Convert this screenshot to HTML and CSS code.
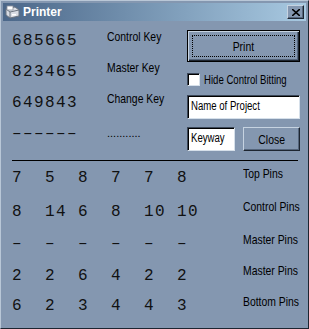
FILE: index.html
```html
<!DOCTYPE html>
<html lang="en">
<head>
    <meta charset="UTF-8">
    <title>Printer</title>
    <link rel="stylesheet" href="styles.css">
</head>
<body>
    <div class="window">
        <div class="titlebar">
            <svg class="app-icon" width="16" height="14" viewBox="0 0 16 14">
                <path d="M2 4 L11 2 L15 5 L15 11 L6 13 L2 10 Z" fill="#d8dce4" stroke="#6b7480" stroke-width="1"/>
                <path d="M2 4 L6 7 L15 5" fill="none" stroke="#6b7480" stroke-width="1"/>
                <path d="M6 7 L6 13" stroke="#6b7480" stroke-width="1"/>
                <rect x="3" y="1" width="6" height="4" fill="#ffffff" stroke="#8a919c" stroke-width="0.8"/>
                <rect x="8" y="9" width="4" height="1.5" fill="#ffffff"/>
            </svg>
            <span class="title">Printer</span>
            <button class="title-close">
                <svg width="8" height="7" viewBox="0 0 8 7"><path d="M0 0 L8 7 M8 0 L0 7" stroke="#000" stroke-width="1.6"/></svg>
            </button>
        </div>

        <div class="content">
            <div class="top">
                <div class="keys">
                    <div class="num">685665</div><div class="label"><span class="t">Control Key</span></div>
                    <div class="num">823465</div><div class="label"><span class="t">Master Key</span></div>
                    <div class="num">649843</div><div class="label"><span class="t">Change Key</span></div>
                    <div class="num">––––––</div><div class="label dots">...........</div>
                </div>
                <div class="controls">
                    <button class="btn btn-default"><span class="focus"><span class="t">Print</span></span></button>
                    <label class="check"><span class="box"></span><span class="t">Hide Control Bitting</span></label>
                    <div class="textbox wide"><span class="t">Name of Project</span></div>
                    <div class="row">
                        <div class="textbox small"><span class="t">Keyway</span></div>
                        <button class="btn btn-close"><span class="t mid">Close</span></button>
                    </div>
                </div>
            </div>

            <div class="divider"></div>

            <div class="pins">
                <span>7</span><span>5</span><span>8</span><span>7</span><span>7</span><span>8</span><div class="label"><span class="t">Top Pins</span></div>
                <span>8</span><span>14</span><span>6</span><span>8</span><span>10</span><span>10</span><div class="label"><span class="t">Control Pins</span></div>
                <span>–</span><span>–</span><span>–</span><span>–</span><span>–</span><span>–</span><div class="label"><span class="t">Master Pins</span></div>
                <span>2</span><span>2</span><span>6</span><span>4</span><span>2</span><span>2</span><div class="label"><span class="t">Master Pins</span></div>
                <span>6</span><span>2</span><span>3</span><span>4</span><span>4</span><span>3</span><div class="label"><span class="t">Bottom Pins</span></div>
            </div>
        </div>
    </div>
</body>
</html>
```

FILE: styles.css
```css
body {
    margin: 0;
    font-family: "Liberation Sans", Arial, sans-serif;
}

.window {
    width: 309px;
    height: 329px;
    box-sizing: border-box;
    background-color: #8497b0;
    border: 1px solid;
    border-color: #b9c7d7 #1d2530 #1d2530 #b9c7d7;
    padding: 2px;
    overflow: hidden;
}

.titlebar {
    height: 18px;
    display: flex;
    align-items: center;
    background: linear-gradient(to right, #4b6789, #a8c9e1);
}

.app-icon {
    margin-left: 1px;
}

.title {
    margin-left: 3px;
    color: white;
    font-weight: bold;
    font-size: 12px;
}

.title-close {
    margin-left: auto;
    margin-right: 2px;
    width: 17px;
    height: 14px;
    padding: 0;
    display: flex;
    justify-content: center;
    align-items: center;
    background-color: #8497b0;
    border: 1px solid;
    border-color: #c6d3e1 #1d2530 #1d2530 #c6d3e1;
    box-shadow: inset -1px -1px 0 #55657b;
}

/* narrow system font look */
.t {
    display: inline-block;
    white-space: nowrap;
    transform: scaleX(0.8);
    transform-origin: left center;
}

.btn .t {
    transform-origin: center;
}

.content {
    padding: 4px 0 0 9px;
}

.top {
    display: flex;
}

.keys {
    display: grid;
    grid-template-columns: 95px 80px;
    grid-template-rows: repeat(4, 31px);
}

.num, .pins > span {
    font-family: "Liberation Mono", monospace;
    font-size: 16px;
    letter-spacing: 1.4px;
    color: #111;
    display: flex;
    align-items: center;
}

.label {
    font-size: 13px;
    color: #000;
    padding-top: 4px;
    white-space: nowrap;
}

.dots {
    padding-top: 0;
    display: flex;
    align-items: center;
    font-size: 11px;
    margin-top: -1px;
}

.controls {
    width: 113px;
    padding-top: 5px;
    display: flex;
    flex-direction: column;
}

.btn {
    font-family: inherit;
    font-size: 13px;
    color: #000;
    background-color: #8497b0;
    border: 1px solid;
    border-color: #c6d3e1 #1d2530 #1d2530 #c6d3e1;
    box-shadow: inset -1px -1px 0 #55657b;
    padding: 0;
}

.btn-default {
    height: 32px;
    border: 1px solid #000;
    box-shadow: inset 1px 1px 0 #c6d3e1, inset -1px -1px 0 #1d2530, inset -2px -2px 0 #55657b;
    padding: 4px;
}

.focus {
    display: flex;
    justify-content: center;
    align-items: center;
    height: 100%;
    border: 1px dotted #000;
    box-sizing: border-box;
}

.check {
    margin-top: 11px;
    height: 13px;
    display: flex;
    align-items: center;
    font-size: 12px;
}

.box {
    flex: none;
    width: 13px;
    height: 13px;
    box-sizing: border-box;
    background: white;
    border: 1px solid;
    border-color: #3b4758 #d6e0ea #d6e0ea #3b4758;
    box-shadow: inset 1px 1px 0 #000;
    margin-right: 4px;
}

.textbox {
    height: 24px;
    box-sizing: border-box;
    background: white;
    border: 1px solid;
    border-color: #3b4758 #d6e0ea #d6e0ea #3b4758;
    box-shadow: inset 1px 1px 0 #000;
    font-size: 12px;
    padding: 3px 0 0 3px;
    overflow: hidden;
}

.wide {
    margin-top: 9px;
}

.row {
    margin-top: 8px;
    display: flex;
    gap: 8px;
}

.small {
    width: 48px;
}

.btn-close {
    width: 57px;
    height: 24px;
}

.divider {
    margin-top: 9px;
    width: 286px;
    height: 1px;
    background: #000;
}

.pins {
    display: grid;
    grid-template-columns: repeat(6, 33px) 33px auto;
    grid-template-rows: 34px 33px 32px 31px 30px;
}

.pins .label {
    grid-column: 8;
    padding-top: 0;
    display: flex;
    align-items: center;
    margin-bottom: 10px;
}
```
